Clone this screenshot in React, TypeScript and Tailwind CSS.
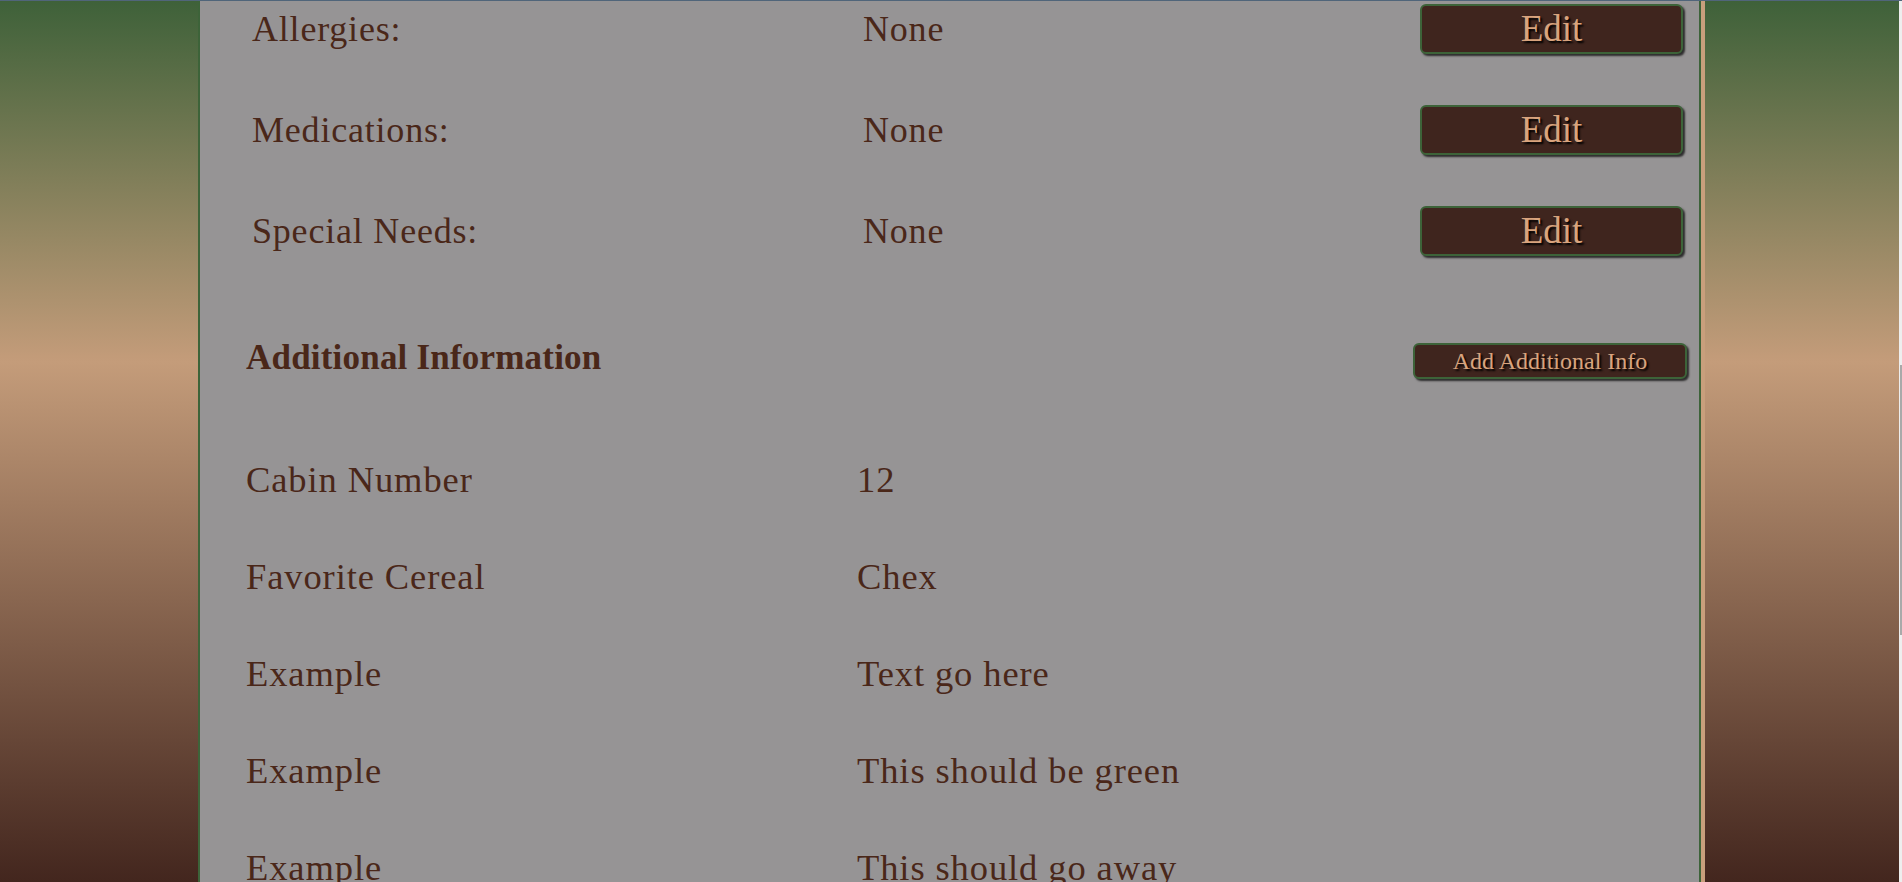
import React from 'react';

const serif = { fontFamily: '"Liberation Serif", "Times New Roman", serif' };

const healthRows = [
  { label: 'Allergies:', value: 'None' },
  { label: 'Medications:', value: 'None' },
  { label: 'Special Needs:', value: 'None' },
];

const extraRows = [
  { label: 'Cabin Number', value: '12' },
  { label: 'Favorite Cereal', value: 'Chex' },
  { label: 'Example', value: 'Text go here' },
  { label: 'Example', value: 'This should be green' },
  { label: 'Example', value: 'This should go away' },
];

function BrownButton({ children, className }: { children: React.ReactNode; className: string }) {
  return (
    <button
      className={`flex items-center justify-center rounded-md border-2 border-[#3d6339] bg-[#3f251e] text-[#d9a47e] leading-none shadow-[2px_2px_2px_rgba(0,0,0,0.7)] [text-shadow:2px_2px_2px_#000] ${className}`}
    >
      {children}
    </button>
  );
}

export default function App() {
  return (
    <div className="h-screen overflow-hidden bg-[linear-gradient(to_bottom,#3e6139_0%,#c49c7a_41%,#43261e_100%)]" style={serif}>
      <div className="h-px bg-[#50657a]" />
      <div className="flex h-[881px]">
        <div className="w-[198px] shrink-0" />
        <div className="w-[1503px] shrink-0 overflow-hidden border-x-2 border-[#3d6339] bg-[#969495] text-[#4a2719]">
          <div className="mt-[-23px] pl-[52px] pr-[16px]">
            {healthRows.map((r) => (
              <div key={r.label} className="flex h-[101px] items-center text-[36px] leading-[40px]">
                <div className="w-[611px] tracking-[0.8px]">{r.label}</div>
                <div className="flex-1 tracking-[0.8px]">{r.value}</div>
                <BrownButton className="h-[50px] w-[263px] text-[37px]">Edit</BrownButton>
              </div>
            ))}
          </div>
          <div className="pl-[46px] pr-[12px]">
            <div className="flex h-[150px] items-center pt-[10px]">
              <h2 className="flex-1 pb-[6px] text-[35px] font-bold leading-[40px] tracking-[0.2px]">Additional Information</h2>
              <BrownButton className="h-[36px] w-[274px] text-[24px]">Add Additional Info</BrownButton>
            </div>
            {extraRows.map((r, i) => (
              <div key={i} className="flex h-[97px] items-center text-[36.5px] leading-[40px] tracking-[0.9px]">
                <div className="w-[611px]">{r.label}</div>
                <div className="flex-1">{r.value}</div>
              </div>
            ))}
          </div>
        </div>
        <div className="w-[4px] shrink-0 bg-[#c89f7c]" />
        <div className="flex-1" />
        <div className="flex w-[3px] shrink-0 flex-col bg-[#eeeeee]">
          <div className="h-[364px]" />
          <div className="ml-auto h-[270px] w-[2px] bg-[#a9a9a9]" />
        </div>
      </div>
    </div>
  );
}
